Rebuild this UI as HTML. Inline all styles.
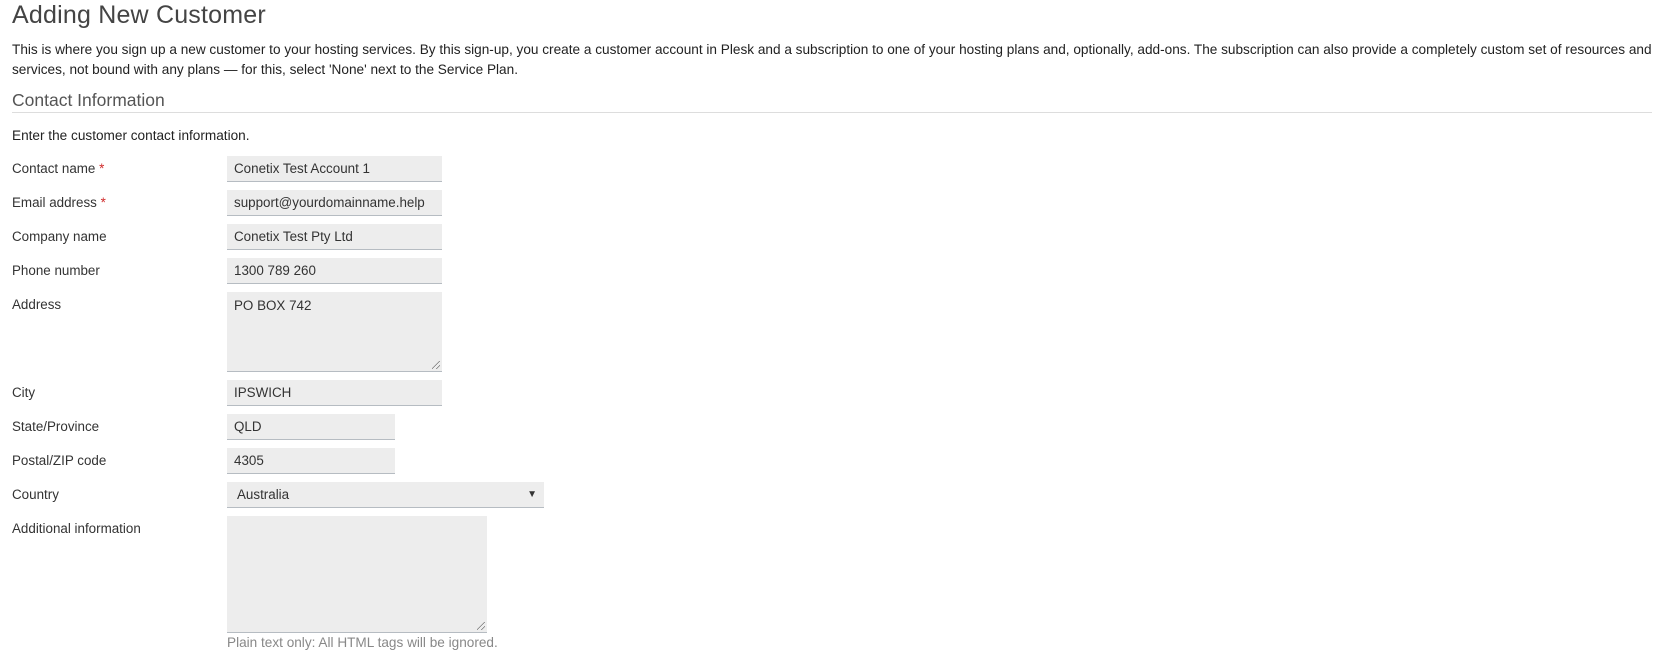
<!DOCTYPE html>
<html><head><meta charset="utf-8"><style>
body{margin:0;background:#fff;font-family:"Liberation Sans",Arial,sans-serif;color:#333;width:1663px;height:661px;overflow:hidden;position:relative}
.a{position:absolute;white-space:nowrap}
h1{position:absolute;left:12px;top:1px;margin:0;font-weight:normal;font-size:25px;color:#444;letter-spacing:0.2px}
.p{font-size:13.62px;left:12px;color:#222}
.h2{left:12px;top:90px;font-size:17.5px;color:#555}
.sep{position:absolute;left:12px;top:112px;width:1640px;height:1px;background:#ddd}
.l{left:12px;font-size:13.4px;color:#333}
.l b{color:#d02b2b;font-weight:normal}
.in{position:absolute;left:227px;background:#ededed;border-bottom:1px solid #b6bcc2;box-sizing:border-box;font-size:13.4px;color:#333;padding-left:7px;line-height:25px;height:26px}
.help{left:227px;top:635px;font-size:13.6px;color:#888}
.grip{position:absolute;right:2px;bottom:2px;width:8px;height:8px;background:linear-gradient(135deg,transparent 45%,#777 45%,#777 52%,transparent 52%,transparent 72%,#777 72%,#777 79%,transparent 79%)}
</style></head><body>
<h1>Adding New Customer</h1>
<div class="a p" style="top:42px">This is where you sign up a new customer to your hosting services. By this sign-up, you create a customer account in Plesk and a subscription to one of your hosting plans and, optionally, add-ons. The subscription can also provide a completely custom set of resources and</div>
<div class="a p" style="top:62px">services, not bound with any plans — for this, select 'None' next to the Service Plan.</div>
<div class="a h2">Contact Information</div>
<div class="sep"></div>
<div class="a p" style="top:128px">Enter the customer contact information.</div>

<div class="a l" style="top:161px">Contact name <b>*</b></div>
<div class="in" style="top:156px;width:215px">Conetix Test Account 1</div>
<div class="a l" style="top:195px">Email address <b>*</b></div>
<div class="in" style="top:190px;width:215px">support@yourdomainname.help</div>
<div class="a l" style="top:229px">Company name</div>
<div class="in" style="top:224px;width:215px">Conetix Test Pty Ltd</div>
<div class="a l" style="top:263px">Phone number</div>
<div class="in" style="top:258px;width:215px">1300 789 260</div>
<div class="a l" style="top:297px">Address</div>
<div class="in" style="top:292px;width:215px;height:80px;line-height:normal;padding-top:6px">PO BOX 742<div class="grip"></div></div>
<div class="a l" style="top:385px">City</div>
<div class="in" style="top:380px;width:215px">IPSWICH</div>
<div class="a l" style="top:419px">State/Province</div>
<div class="in" style="top:414px;width:168px">QLD</div>
<div class="a l" style="top:453px">Postal/ZIP code</div>
<div class="in" style="top:448px;width:168px">4305</div>
<div class="a l" style="top:487px">Country</div>
<div class="in" style="top:482px;width:317px;padding-left:10px">Australia<span style="position:absolute;right:7px;top:0;font-size:10px">▼</span></div>
<div class="a l" style="top:521px">Additional information</div>
<div class="in" style="top:516px;width:260px;height:117px"><div class="grip"></div></div>
<div class="a help">Plain text only: All HTML tags will be ignored.</div>
</body></html>
